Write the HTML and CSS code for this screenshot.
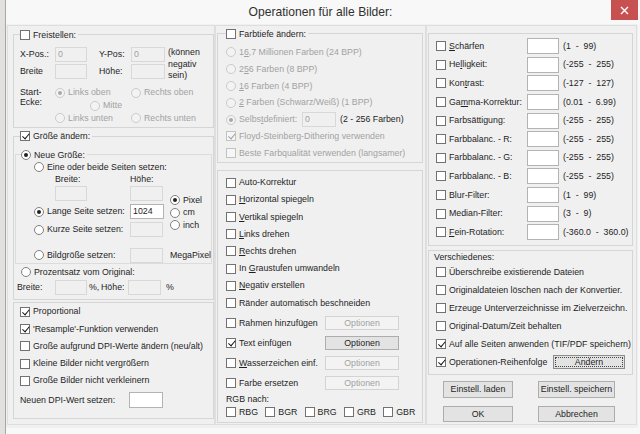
FILE: index.html
```html
<!DOCTYPE html>
<html lang="de">
<head>
<meta charset="utf-8">
<title>Operationen für alle Bilder</title>
<link rel="stylesheet" href="styles.css">
</head>
<body>
<div class="win">
  <div class="titlebar">
    <div class="title">Operationen für alle Bilder:</div>
    <div class="close"><svg width="9" height="9" viewBox="0 0 9 9"><path d="M1 1L8 8M8 1L1 8" stroke="#fff" stroke-width="1.4"/></svg></div>
  </div>
  <div class="client">
    <!-- LEFT COLUMN -->
    <div class="col col-l">
      <div class="grp g-frei">
        <label class="lg ml6"><span class="cb"></span><span>Freistellen:</span></label>
        <div class="frei-grid">
          <span>X-Pos.:</span><span class="in dis w32">0</span><span>Y-Pos:</span><span class="in dis w34">0</span>
          <span class="neg">(können<br>negativ<br>sein)</span>
          <span>Breite</span><span class="in dis w32"></span><span>Höhe:</span><span class="in dis w34"></span>
        </div>
        <div class="start">
          <div class="start-l">Start-<br>Ecke:</div>
          <div class="start-g">
            <label class="opt dt"><span class="rd dis on"></span><span>Links oben</span></label>
            <label class="opt dt"><span class="rd dis"></span><span>Rechts oben</span></label>
            <label class="opt dt mitte"><span class="rd dis"></span><span>Mitte</span></label>
            <label class="opt dt"><span class="rd dis"></span><span>Links unten</span></label>
            <label class="opt dt"><span class="rd dis"></span><span>Rechts unten</span></label>
          </div>
        </div>
      </div>

      <div class="grp g-size">
        <label class="lg lg7 ml6"><span class="cb on"></span><span>Größe ändern:</span></label>
        <div class="grp sub1">
          <label class="lg ml5"><span class="rd on"></span><span>Neue Größe:</span></label>
          <div class="ng">
            <label class="opt ng-r1"><span class="rd"></span><span>Eine oder beide Seiten setzen:</span></label>
            <span class="ng-r2 c2">Breite:</span><span class="ng-r2 c3">Höhe:</span>
            <span class="in dis w32 ng-r3 c2"></span><span class="in dis w33 ng-r3 c3"></span>
            <label class="opt ng-r4 c12"><span class="rd on"></span><span>Lange Seite setzen:</span></label><span class="in w34 ng-r4 c3">1024</span>
            <label class="opt ng-r5 c12"><span class="rd"></span><span>Kurze Seite setzen:</span></label><span class="in dis w33 ng-r5 c3"></span>
            <div class="units">
              <label class="opt unit"><span class="rd on"></span><span>Pixel</span></label>
              <label class="opt unit"><span class="rd"></span><span>cm</span></label>
              <label class="opt unit"><span class="rd"></span><span>inch</span></label>
            </div>
            <label class="opt ng-r7 c12"><span class="rd"></span><span>Bildgröße setzen:</span></label><span class="in dis w33 ng-r7 c3"></span><span class="mp ng-r7">MegaPixel</span>
          </div>
        </div>
        <label class="opt pz"><span class="rd"></span><span>Prozentsatz vom Original:</span></label>
        <div class="pzrow">
          <span class="pz-l">Breite:</span><span class="in dis w32"></span><span class="pz-pc">%,</span><span class="pz-h">Höhe:</span><span class="in dis w33"></span><span class="pz-pc2">%</span>
        </div>
      </div>

      <div class="grp g-opt">
        <label class="chk r17"><span class="cb on"></span><span>Proportional</span></label>
        <label class="chk r17"><span class="cb on"></span><span>'Resample'-Funktion verwenden</span></label>
        <label class="chk r17"><span class="cb"></span><span>Große aufgrund DPI-Werte ändern (neu/alt)</span></label>
        <label class="chk r17"><span class="cb"></span><span>Kleine Bilder nicht vergrößern</span></label>
        <label class="chk r17"><span class="cb"></span><span>Große Bilder nicht verkleinern</span></label>
        <div class="dpi"><span class="dpi-l">Neuen DPI-Wert setzen:</span><span class="in w34"></span></div>
      </div>
    </div>

    <!-- MIDDLE COLUMN -->
    <div class="col col-m">
      <div class="grp g-ft">
        <label class="lg ml8"><span class="cb"></span><span>Farbtiefe ändern:</span></label>
        <div class="ft-rows">
          <label class="opt r168 dt"><span class="rd dis"></span><span>1<u>6</u>,7 Millionen Farben (24 BPP)</span></label>
          <label class="opt r168 dt"><span class="rd dis"></span><span>2<u>5</u>6 Farben (8 BPP)</span></label>
          <label class="opt r168 dt"><span class="rd dis"></span><span><u>1</u>6 Farben (4 BPP)</span></label>
          <label class="opt r168 dt"><span class="rd dis"></span><span><u>2</u> Farben (Schwarz/Weiß) (1 BPP)</span></label>
          <div class="r168 sd">
            <label class="opt sd-l dt"><span class="rd dis on"></span><span>Selbs<u>t</u>definiert:</span></label>
            <span class="in dis w34">0</span>
            <span class="sd-r">(2 - 256 Farben)</span>
          </div>
          <label class="chk r168 dt"><span class="cb dis on"></span><span>Floyd-Steinberg-Dithering verwenden</span></label>
          <label class="chk r168 dt"><span class="cb dis"></span><span>Beste Farbqualität verwenden (langsamer)</span></label>
        </div>
      </div>

      <div class="grp g-fx">
        <label class="chk r172"><span class="cb"></span><span>Auto-Korrektur</span></label>
        <label class="chk r172"><span class="cb"></span><span><u>H</u>orizontal spiegeln</span></label>
        <label class="chk r172"><span class="cb"></span><span><u>V</u>ertikal spiegeln</span></label>
        <label class="chk r172"><span class="cb"></span><span><u>L</u>inks drehen</span></label>
        <label class="chk r172"><span class="cb"></span><span><u>R</u>echts drehen</span></label>
        <label class="chk r172"><span class="cb"></span><span>In <u>G</u>raustufen umwandeln</span></label>
        <label class="chk r172"><span class="cb"></span><span><u>N</u>egativ erstellen</span></label>
        <label class="chk r172"><span class="cb"></span><span>Ränder automatisch beschneiden</span></label>
        <div class="brows">
          <div class="brow"><label class="chk bl"><span class="cb"></span><span>Rahmen hinzufügen</span></label><span class="btn dis w74">Optionen</span></div>
          <div class="brow"><label class="chk bl"><span class="cb on"></span><span>Text einfügen</span></label><span class="btn w74">Optionen</span></div>
          <div class="brow"><label class="chk bl"><span class="cb"></span><span><u>W</u>asserzeichen einf.</span></label><span class="btn dis w74">Optionen</span></div>
          <div class="brow"><label class="chk bl"><span class="cb"></span><span>Farbe ersetzen</span></label><span class="btn dis w74">Optionen</span></div>
        </div>
        <div class="rgb-l">RGB nach:</div>
        <div class="rgb">
          <label class="chk"><span class="cb"></span><span>RBG</span></label>
          <label class="chk"><span class="cb"></span><span>BGR</span></label>
          <label class="chk"><span class="cb"></span><span>BRG</span></label>
          <label class="chk"><span class="cb"></span><span>GRB</span></label>
          <label class="chk"><span class="cb"></span><span>GBR</span></label>
        </div>
      </div>
    </div>

    <!-- RIGHT COLUMN -->
    <div class="col col-r">
      <div class="grp g-fl">
        <div class="fl"><label class="chk fl-l"><span class="cb"></span><span><u>S</u>chärfen</span></label><span class="in w32 h16"></span><span class="rng">(1  -  99)</span></div>
        <div class="fl"><label class="chk fl-l"><span class="cb"></span><span>He<u>l</u>ligkeit:</span></label><span class="in w32 h16"></span><span class="rng">(-255  -  255)</span></div>
        <div class="fl"><label class="chk fl-l"><span class="cb"></span><span>Kon<u>t</u>rast:</span></label><span class="in w32 h16"></span><span class="rng">(-127  -  127)</span></div>
        <div class="fl"><label class="chk fl-l"><span class="cb"></span><span>Ga<u>m</u>ma-Korrektur:</span></label><span class="in w32 h16"></span><span class="rng">(0.01  -  6.99)</span></div>
        <div class="fl"><label class="chk fl-l"><span class="cb"></span><span>Farbsättigung:</span></label><span class="in w32 h16"></span><span class="rng">(-255  -  255)</span></div>
        <div class="fl"><label class="chk fl-l"><span class="cb"></span><span>Farbbalanc. - R:</span></label><span class="in w32 h16"></span><span class="rng">(-255  -  255)</span></div>
        <div class="fl"><label class="chk fl-l"><span class="cb"></span><span>Farbbalanc. - G:</span></label><span class="in w32 h16"></span><span class="rng">(-255  -  255)</span></div>
        <div class="fl"><label class="chk fl-l"><span class="cb"></span><span>Farbbalanc. - B:</span></label><span class="in w32 h16"></span><span class="rng">(-255  -  255)</span></div>
        <div class="fl"><label class="chk fl-l"><span class="cb"></span><span>Blur-Filter:</span></label><span class="in w32 h16"></span><span class="rng">(1  -  99)</span></div>
        <div class="fl"><label class="chk fl-l"><span class="cb"></span><span>Median-Filter:</span></label><span class="in w32 h16"></span><span class="rng">(3  -  9)</span></div>
        <div class="fl"><label class="chk fl-l"><span class="cb"></span><span><u>F</u>ein-Rotation:</span></label><span class="in w32 h16"></span><span class="rng">(-360.0  -  360.0)</span></div>
      </div>

      <div class="grp g-misc">
        <div class="misc-l">Verschiedenes:</div>
        <label class="chk r18"><span class="cb"></span><span>Überschreibe existierende Dateien</span></label>
        <label class="chk r18"><span class="cb"></span><span>Originaldateien löschen nach der Konvertier.</span></label>
        <label class="chk r18"><span class="cb"></span><span>Erzeuge Unterverzeichnisse im Zielverzeichn.</span></label>
        <label class="chk r18"><span class="cb"></span><span>Original-Datum/Zeit behalten</span></label>
        <label class="chk r18"><span class="cb on"></span><span>Auf alle Seiten anwenden (TIF/PDF speichern)</span></label>
        <div class="r18 orow"><label class="chk or-l"><span class="cb on"></span><span>Operationen-Reihenfolge</span></label><span class="btn focus w72">Ändern</span></div>
      </div>

      <div class="btns">
        <span class="btn">Einstell. laden</span>
        <span class="btn">Einstell. speichern</span>
        <span class="btn">OK</span>
        <span class="btn">Abbrechen</span>
      </div>
    </div>
  </div>
</div>
</body>
</html>
```
FILE: styles.css
```css
* { box-sizing: border-box; }
html, body { margin: 0; padding: 0; }
body {
  width: 640px; height: 434px; overflow: hidden;
  background: #e2e0dd;
  font-family: "Liberation Sans", Arial, sans-serif;
  font-size: 8.8px; line-height: 1; color: #1e1e1e;
}
u { text-decoration-thickness: 1px; text-underline-offset: 1px; }

.win {
  margin-left: 5px; width: 635px; height: 434px;
  border-left: 1px solid #a6a6a6;
  background: #f8f8f8;
  display: flex; flex-direction: column;
}
.titlebar {
  height: 24px; flex: none;
  display: grid; grid-template-columns: 1fr auto 1fr; align-items: start;
}
.title { grid-column: 2; font-size: 12.1px; color: #303030; padding-top: 6px; margin-right: 5px; }
.close {
  grid-column: 3; justify-self: end; margin-right: 2px;
  width: 27px; height: 20px; background: #c75050;
  display: flex; align-items: center; justify-content: center;
}

.client {
  height: 404px; margin-right: 2px; flex: none;
  background: #f0f0f0; display: flex; padding: 1px 0 0 1px;
}
.col { height: 400px; border: 1px solid #dedede; display: flex; flex-direction: column; flex: none; }
.col-l { width: 208px; padding: 8px 0 0 5px; }
.col-m { width: 211px; padding: 7px 2px 0 1px; }
.col-r { width: 211px; padding: 7px 3px 0 1px; }

.grp { border: 1px solid #d5d5d5; flex: none; }
.lg {
  display: flex; align-items: center; gap: 3px; height: 12px;
  margin-top: -6px; width: max-content; background: #f0f0f0; padding-right: 2px;
}
.lg7 { margin-top: -7px; }
.ml5 { margin-left: 5px; }
.ml6 { margin-left: 6px; }
.ml8 { margin-left: 8px; }

/* controls */
.cb { width: 10px; height: 10px; border: 1px solid #727272; background: #fff; flex: none; position: relative; }
.cb.on::after {
  content: ""; position: absolute; left: 2.6px; top: 0px; width: 3px; height: 5.6px;
  border: solid #111; border-width: 0 1.8px 1.8px 0; transform: rotate(40deg);
}
.cb.dis { border-color: #c2c2c2; background: #f6f6f6; }
.cb.dis.on::after { border-color: #9c9c9c; }

.rd { width: 10px; height: 10px; border-radius: 50%; border: 1px solid #808080; background: #fff; flex: none; position: relative; }
.rd.on::after { content: ""; position: absolute; left: 2px; top: 2px; width: 4px; height: 4px; border-radius: 50%; background: #222; }
.rd.dis { border-color: #cbcbcb; background: #f3f3f3; }
.rd.dis.on::after { background: #a9a9a9; }

.opt, .chk { display: flex; align-items: center; gap: 3px; white-space: nowrap; }
.dt { color: #a2a2a2; }

.in {
  display: block; height: 15px; border: 1px solid #b3b3b3; background: #fff;
  padding: 2px 0 0 2px; flex: none; color: #1e1e1e;
}
.in.dis { border-color: #d8d8d8; background: #f0f0f0; color: #a2a2a2; }
.w32 { width: 32px; } .w33 { width: 33px; } .w34 { width: 34px; }
.h16 { height: 16px; }

.btn {
  display: flex; align-items: center; justify-content: center; position: relative;
  border: 1px solid #adadad; background: #e3e3e3; height: 14px; white-space: nowrap;
}
.btn.dis { border-color: #d3d3d3; background: #f3f3f3; color: #a2a2a2; }
.btn.focus { border-color: #8c8c8c; }
.btn.focus::after { content: ""; position: absolute; inset: 1px; border: 1px dotted #444; }
.w72 { width: 72px; } .w74 { width: 74px; }

/* Freistellen */
.g-frei { height: 94px; }
.frei-grid {
  display: grid; grid-template-columns: 35px 44px 32px 37px 1fr;
  grid-template-rows: 15px 15px; row-gap: 2px; align-items: center;
  margin-top: 6px; padding-left: 6px;
}
.neg { grid-column: 5; grid-row: 1 / 3; align-self: start; line-height: 11.5px; }
.start { display: flex; margin-top: 7px; padding-left: 6px; }
.start-l { width: 35px; line-height: 10px; padding-top: 1px; flex: none; }
.start-g { display: grid; grid-template-columns: 76px 1fr; grid-template-rows: 13px 13px 12px; align-items: center; }
.mitte { grid-column: 1 / 3; padding-left: 35px; }

/* Größe */
.g-size { height: 164px; margin-top: 8px; }
.sub1 { width: 197px; height: 110px; margin: 12px 0 0 1px; border-color: #dcdcdc; }
.ng {
  display: grid; padding-left: 18px;
  grid-template-columns: 21px 75px 36px 1fr;
  grid-template-rows: 12px 12px 17px 19px 17px 9px 16px;
  align-items: center;
}
.ng-r1 { grid-row: 1; grid-column: 1 / 5; }
.ng-r2 { grid-row: 2; }
.ng-r3 { grid-row: 3; }
.ng-r4 { grid-row: 4; }
.ng-r5 { grid-row: 5; }
.ng-r7 { grid-row: 7; }
.c2 { grid-column: 2; }
.c3 { grid-column: 3; }
.c12 { grid-column: 1 / 3; }
.units { grid-row: 3 / 7; grid-column: 4; align-self: start; padding: 9px 0 0 4px; }
.unit { height: 12.5px; }
.mp { grid-column: 4; padding-left: 4px; }
.pz { height: 12px; margin: 2px 0 0 7px; }
.pzrow { display: flex; align-items: center; height: 15px; margin-top: 2px; padding-left: 3px; }
.pz-l { width: 38px; }
.pz-pc { width: 14px; padding-left: 2px; }
.pz-h { width: 27px; }
.pz-pc2 { padding-left: 5px; }

/* Optionen links unten */
.g-opt { height: 117px; margin-top: 2px; padding-left: 6px; }
.r17 { height: 17.3px; }
.dpi { display: flex; align-items: center; height: 16px; margin-top: 2.5px; }
.dpi-l { width: 109px; }
.dpi .in { height: 16px; }

/* Farbtiefe */
.g-ft { height: 130px; }
.ft-rows { margin-top: 4px; padding-left: 8px; }
.r168 { height: 16.8px; }
.sd { display: flex; align-items: center; }
.sd-l { width: 76px; }
.sd-r { margin-left: 4px; }

/* Effekte */
.g-fx { height: 253px; margin-top: 7px; padding: 3px 0 0 8px; }
.r172 { height: 17.2px; }
.brows { margin-top: 1.5px; }
.brow { display: flex; align-items: center; height: 20px; }
.bl { width: 99px; }
.rgb-l { height: 12px; display: flex; align-items: center; }
.rgb { display: grid; grid-template-columns: repeat(5, 39.3px); height: 12px; align-items: center; margin-top: 1px; }

/* Filter rechts */
.g-fl { height: 213px; padding: 3px 0 0 7px; }
.fl { display: flex; align-items: center; height: 18.6px; }
.fl-l { width: 91px; }
.rng { margin-left: 4px; white-space: pre; }

/* Verschiedenes */
.g-misc { height: 125px; margin-top: 4px; padding-left: 7px; }
.misc-l { height: 12px; display: flex; align-items: center; margin-left: -2px; }
.r18 { height: 18px; }
.orow { display: flex; align-items: center; }
.or-l { width: 117px; }

/* Buttons */
.btns {
  display: grid; grid-template-columns: 70px 77px; grid-template-rows: 17px 16px;
  column-gap: 25px; row-gap: 8px; margin-top: 6px; padding-left: 15px;
}
.btns .btn { height: auto; }
```
